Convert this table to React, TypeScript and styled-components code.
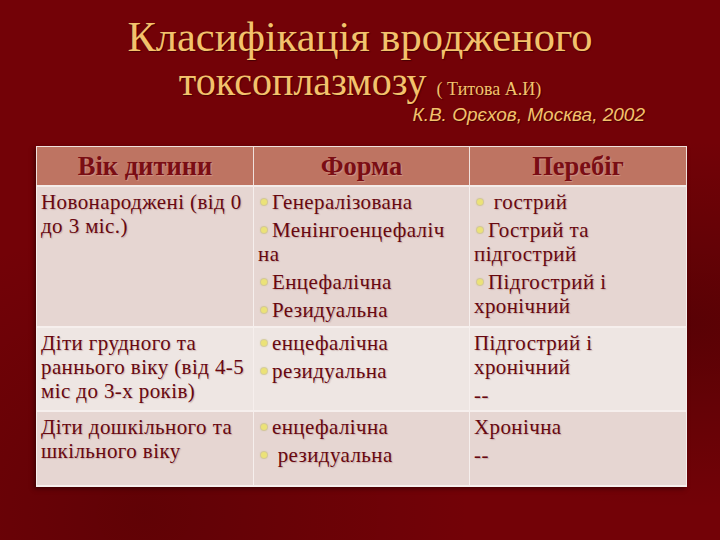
import styled, { createGlobalStyle } from 'styled-components';

const GlobalStyle = createGlobalStyle`
  html, body {
    margin: 0;
    padding: 0;
    background: #720308;
  }
`;

const Slide = styled.div`
  width: 720px;
  height: 540px;
  overflow: hidden;
  background:
    radial-gradient(ellipse at 95% 60%, rgba(40, 0, 0, 0.35), transparent 40%),
    radial-gradient(ellipse at 20% 95%, rgba(40, 0, 0, 0.25), transparent 40%),
    #730207;
  display: flex;
  flex-direction: column;
`;

const TitleBlock = styled.div`
  display: flex;
  flex-direction: column;
  align-items: center;
  padding-top: 14px;
  color: #f3c26c;
  font-family: 'Liberation Serif', 'Times New Roman', serif;
  text-shadow: 1px 1px 1px rgba(40, 0, 0, 0.6);
`;

const TitleLine = styled.div<{ $size: number }>`
  font-size: ${p => p.$size}px;
  line-height: 45px;
  white-space: nowrap;
`;

const Author = styled.span`
  font-size: 18px;
  margin-left: 10px;
`;

const Source = styled.div`
  align-self: flex-end;
  margin: -8px 75px 0 0;
  font-family: 'Liberation Sans', sans-serif;
  font-style: italic;
  font-size: 19px;
  line-height: 22px;
  color: #f3c26c;
`;

const Table = styled.table`
  margin: 20px 0 0 36px;
  width: 650px;
  border-collapse: collapse;
  table-layout: fixed;
  font-family: 'Liberation Serif', 'Times New Roman', serif;
  color: #680810;
  box-shadow: -2px 2px 4px rgba(30, 0, 0, 0.5);
`;

const HeadCell = styled.th`
  background: #be7462;
  height: 38px;
  padding: 0;
  font-size: 26.5px;
  font-weight: bold;
  color: #7a0d14;
  border: 1px solid #f0e0dc;
  border-bottom: 2px solid #f4ece9;
  text-shadow: 1px 1px 1px rgba(255, 220, 210, 0.3);
`;

const Row = styled.tr<{ $light?: boolean; $height: number }>`
  background: ${p => (p.$light ? '#eee6e3' : '#e6d6d2')};
  height: ${p => p.$height}px;
`;

const Cell = styled.td`
  vertical-align: top;
  padding: 3px 3px 0 4px;
  font-size: 21px;
  letter-spacing: 0.4px;
  line-height: 24px;
  border: 1px solid #f6efed;
  border-bottom-width: 2px;
  text-shadow: 1px 1px 1px rgba(120, 60, 60, 0.25);
`;

const Para = styled.div`
  & + & {
    margin-top: 4px;
  }
`;

const Bullet = styled.span`
  display: inline-block;
  width: 6px;
  height: 6px;
  border-radius: 50%;
  background: #ebe278;
  box-shadow: 0 0 1px 1px rgba(200, 190, 120, 0.7);
  vertical-align: middle;
  margin: 0 5px 4px 3px;
`;

type Line = { text: string; bullet?: boolean };

const rows: { age: string; light?: boolean; height: number; form: Line[]; course: Line[] }[] = [
  {
    age: 'Новонароджені (від 0 до 3 міс.)',
    height: 141,
    form: [
      { text: 'Генералізована', bullet: true },
      { text: 'Менінгоенцефаліч\nна', bullet: true },
      { text: 'Енцефалічна', bullet: true },
      { text: 'Резидуальна', bullet: true },
    ],
    course: [
      { text: ' гострий', bullet: true },
      { text: 'Гострий та підгострий', bullet: true },
      { text: 'Підгострий і хронічний', bullet: true },
    ],
  },
  {
    age: 'Діти грудного та раннього віку (від 4-5 міс до 3-х років)',
    light: true,
    height: 84,
    form: [
      { text: 'енцефалічна', bullet: true },
      { text: 'резидуальна', bullet: true },
    ],
    course: [{ text: 'Підгострий і хронічний' }, { text: '--' }],
  },
  {
    age: 'Діти дошкільного та шкільного віку',
    height: 75,
    form: [
      { text: 'енцефалічна', bullet: true },
      { text: ' резидуальна', bullet: true },
    ],
    course: [{ text: 'Хронічна' }, { text: '--' }],
  },
];

function Lines({ items }: { items: Line[] }) {
  return (
    <>
      {items.map((l, i) => (
        <Para key={i}>
          {l.bullet && <Bullet />}
          {l.text.split('\n').map((part, j) => (
            <span key={j}>
              {j > 0 && <br />}
              {part}
            </span>
          ))}
        </Para>
      ))}
    </>
  );
}

export default function App() {
  return (
    <>
      <GlobalStyle />
      <Slide>
        <TitleBlock>
          <TitleLine $size={42.5}>Класифікація вродженого</TitleLine>
          <TitleLine $size={40}>
            токсоплазмозу<Author>( Титова А.И)</Author>
          </TitleLine>
          <Source>К.В. Орєхов, Москва, 2002</Source>
        </TitleBlock>

        <Table>
          <colgroup>
            <col style={{ width: 217 }} />
            <col style={{ width: 216 }} />
            <col style={{ width: 217 }} />
          </colgroup>
          <thead>
            <tr>
              <HeadCell>Вік дитини</HeadCell>
              <HeadCell>Форма</HeadCell>
              <HeadCell>Перебіг</HeadCell>
            </tr>
          </thead>
          <tbody>
            {rows.map((r, i) => (
              <Row key={i} $light={r.light} $height={r.height}>
                <Cell>{r.age}</Cell>
                <Cell>
                  <Lines items={r.form} />
                </Cell>
                <Cell>
                  <Lines items={r.course} />
                </Cell>
              </Row>
            ))}
          </tbody>
        </Table>
      </Slide>
    </>
  );
}
